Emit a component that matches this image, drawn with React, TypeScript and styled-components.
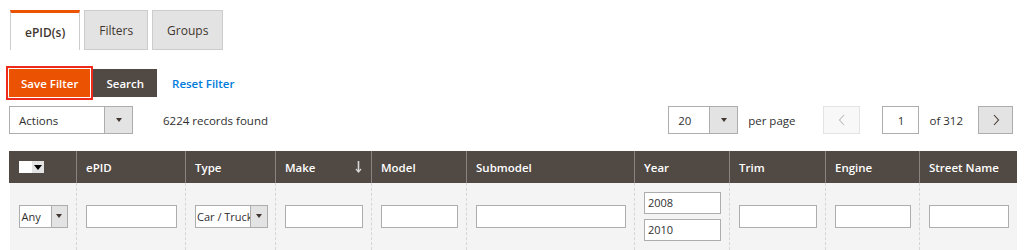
import styled, { createGlobalStyle } from "styled-components";

const GlobalStyle = createGlobalStyle`
  body {
    margin: 0;
    font-family: "Open Sans", "Liberation Sans", sans-serif;
    font-size: 11.5px;
    color: #303030;
    background: #fff;
  }
  * { box-sizing: border-box; }
`;

const Page = styled.div`
  padding: 10px 8px 0 9px;
`;

const TabBar = styled.div`
  display: flex;
  gap: 4px;
  margin-left: 1px;
`;

const Tab = styled.div<{ $active?: boolean }>`
  height: 40px;
  padding: 0 14px;
  display: flex;
  align-items: center;
  font-size: 12px;
  color: #41362f;
  font-weight: ${p => (p.$active ? 600 : 400)};
  background: ${p => (p.$active ? "#fff" : "#e3e3e3")};
  border: 1px solid #ccc;
  border-top: ${p => (p.$active ? "3px solid #eb5202" : "1px solid #ccc")};
  border-bottom: ${p => (p.$active ? "none" : "1px solid #ccc")};
  padding-top: ${p => (p.$active ? "1px" : "0")};
`;

const ButtonRow = styled.div`
  display: flex;
  align-items: center;
  margin-top: 19px;
`;

const Button = styled.button<{ $primary?: boolean }>`
  height: 28px;
  padding: 0 ${p => (p.$primary ? "11px" : "12px")};
  font-family: inherit;
  font-size: 11.5px;
  font-weight: 600;
  color: #fff;
  border: 1px solid ${p => (p.$primary ? "#eb5202" : "#514943")};
  background: ${p => (p.$primary ? "#eb5202" : "#514943")};
  outline: ${p => (p.$primary ? "2px solid #ee2a1c" : "none")};
  outline-offset: 1px;
  margin-left: ${p => (p.$primary ? "0" : "3px")};
`;

const ResetLink = styled.a`
  margin-left: 15px;
  color: #007bdb;
  font-weight: 600;
  text-decoration: none;
`;

const Toolbar = styled.div`
  display: flex;
  justify-content: space-between;
  align-items: center;
  margin-top: 9px;
  height: 28px;
`;

const ToolGroup = styled.div<{ $end?: number }>`
  display: flex;
  align-items: center;
  margin-right: ${p => p.$end ?? 0}px;
`;

const Note = styled.span<{ $gap: number }>`
  margin-left: ${p => p.$gap}px;
  color: #303030;
`;

const SelectBox = styled.div<{ $w: number; $h: number; $gap?: number; $small?: boolean }>`
  position: relative;
  display: flex;
  width: ${p => p.$w}px;
  height: ${p => p.$h}px;
  margin-left: ${p => p.$gap ?? 0}px;
  border: 1px solid #adadad;
  background: #fff;
  overflow: hidden;
  font-size: ${p => (p.$small ? "11px" : "inherit")};
`;

const SelectText = styled.span<{ $pad: number }>`
  flex: 1;
  display: flex;
  align-items: center;
  padding-left: ${p => p.$pad}px;
  white-space: nowrap;
  color: #303030;
`;

const SelectArrow = styled.span<{ $w: number }>`
  position: absolute;
  top: 0;
  right: 0;
  bottom: 0;
  width: ${p => p.$w}px;
  display: flex;
  align-items: center;
  justify-content: center;
  background: #e3e3e3;
  border-left: 1px solid #adadad;
  &::after {
    content: "";
    border-left: 3.5px solid transparent;
    border-right: 3.5px solid transparent;
    border-top: 4px solid #41362f;
  }
`;

const PageButton = styled.span<{ $disabled?: boolean; $gap: number }>`
  width: ${p => (p.$disabled ? 37 : 35)}px;
  height: 28px;
  margin-left: ${p => p.$gap}px;
  display: flex;
  align-items: center;
  justify-content: center;
  background: ${p => (p.$disabled ? "#f8f8f8" : "#e3e3e3")};
  border: 1px solid ${p => (p.$disabled ? "#e3e3e3" : "#adadad")};
  color: ${p => (p.$disabled ? "#bdbdbd" : "#41362f")};
`;

const PageInput = styled.span`
  width: 37px;
  height: 28px;
  margin-left: 22px;
  border: 1px solid #adadad;
  display: flex;
  align-items: center;
  justify-content: center;
`;

const Grid = styled.table`
  margin-top: 17px;
  width: 1007px;
  border-collapse: collapse;
  table-layout: fixed;
`;

const HeadCell = styled.th`
  height: 32px;
  padding: 0 9px;
  background: #514943;
  color: #fff;
  font-weight: 600;
  text-align: left;
  white-space: nowrap;
  border-left: 1px solid #8a837f;
  border-right: 1px solid #8a837f;
  &:first-child { border-left-color: #514943; }
  &:last-child { border-right-color: #514943; }
`;

const SortHead = styled.div`
  display: flex;
  align-items: center;
  justify-content: space-between;
`;

const FilterCell = styled.td`
  height: 67px;
  padding: 0 8px 0 9px;
  background: #f4f4f4;
  border-left: 1px dashed #d6d6d6;
  border-right: 1px dashed #d6d6d6;
  border-bottom: 1px solid #e3e3e3;
  vertical-align: middle;
  &:first-child { border-left: none; }
  &:last-child { border-right: none; }
`;

const TextInput = styled.div<{ $h?: number }>`
  width: 100%;
  height: ${p => p.$h ?? 23}px;
  padding: 0 3px;
  display: flex;
  align-items: center;
  font-size: 11px;
  background: #fff;
  border: 1px solid #adadad;
`;

const YearStack = styled.div`
  display: flex;
  flex-direction: column;
  gap: 5px;
`;

const MassCheck = styled.div`
  display: flex;
  width: 25px;
  height: 12px;
  background: #fff;
`;

const MassArrow = styled.span`
  margin-left: auto;
  width: 12px;
  display: flex;
  align-items: center;
  justify-content: center;
  background: #e3e3e3;
  &::after {
    content: "";
    border-left: 4px solid transparent;
    border-right: 4px solid transparent;
    border-top: 5px solid #000;
  }
`;

const Chevron = ({ dir }: { dir: "left" | "right" }) => (
  <svg width="8" height="12" viewBox="0 0 8 12">
    <polyline
      points={dir === "left" ? "6,1 1.5,6 6,11" : "2,1 6.5,6 2,11"}
      fill="none"
      stroke="currentColor"
      strokeWidth="1.1"
    />
  </svg>
);

const SortArrow = () => (
  <svg width="7" height="12" viewBox="0 0 7 12">
    <line x1="3.5" y1="0" x2="3.5" y2="10" stroke="#d9d9d9" strokeWidth="1.6" />
    <polyline points="1,8 3.5,11 6,8" fill="none" stroke="#d9d9d9" strokeWidth="1.2" />
  </svg>
);

const columns = [
  { name: "", width: 67 },
  { name: "ePID", width: 109 },
  { name: "Type", width: 90 },
  { name: "Make", width: 96, sorted: true },
  { name: "Model", width: 95 },
  { name: "Submodel", width: 168 },
  { name: "Year", width: 95 },
  { name: "Trim", width: 96 },
  { name: "Engine", width: 94 },
  { name: "Street Name", width: 97 },
];

export default function App() {
  return (
    <Page>
      <GlobalStyle />
      <TabBar>
        <Tab $active>ePID(s)</Tab>
        <Tab>Filters</Tab>
        <Tab>Groups</Tab>
      </TabBar>

      <ButtonRow>
        <Button $primary>Save Filter</Button>
        <Button>Search</Button>
        <ResetLink href="#">Reset Filter</ResetLink>
      </ButtonRow>

      <Toolbar>
        <ToolGroup>
          <SelectBox $w={124} $h={28}>
            <SelectText $pad={9}>Actions</SelectText>
            <SelectArrow $w={28} />
          </SelectBox>
          <Note $gap={30}>6224 records found</Note>
        </ToolGroup>
        <ToolGroup $end={3}>
          <SelectBox $w={70} $h={28}>
            <SelectText $pad={9}>20</SelectText>
            <SelectArrow $w={28} />
          </SelectBox>
          <Note $gap={10}>per page</Note>
          <PageButton $disabled $gap={28}>
            <Chevron dir="left" />
          </PageButton>
          <PageInput>1</PageInput>
          <Note $gap={10}>of 312</Note>
          <PageButton $gap={15}>
            <Chevron dir="right" />
          </PageButton>
        </ToolGroup>
      </Toolbar>

      <Grid>
        <colgroup>
          {columns.map((c, i) => (
            <col key={i} style={{ width: c.width }} />
          ))}
        </colgroup>
        <thead>
          <tr>
            {columns.map((c, i) => (
              <HeadCell key={i}>
                {i === 0 ? (
                  <MassCheck>
                    <MassArrow />
                  </MassCheck>
                ) : c.sorted ? (
                  <SortHead>
                    {c.name}
                    <SortArrow />
                  </SortHead>
                ) : (
                  c.name
                )}
              </HeadCell>
            ))}
          </tr>
        </thead>
        <tbody>
          <tr>
            <FilterCell>
              <SelectBox $w={49} $h={23} $small>
                <SelectText $pad={2}>Any</SelectText>
                <SelectArrow $w={16} />
              </SelectBox>
            </FilterCell>
            <FilterCell>
              <TextInput />
            </FilterCell>
            <FilterCell>
              <SelectBox $w={73} $h={23} $small>
                <SelectText $pad={1}>Car / Truck</SelectText>
                <SelectArrow $w={17} />
              </SelectBox>
            </FilterCell>
            <FilterCell>
              <TextInput />
            </FilterCell>
            <FilterCell>
              <TextInput />
            </FilterCell>
            <FilterCell>
              <TextInput />
            </FilterCell>
            <FilterCell>
              <YearStack>
                <TextInput $h={22}>2008</TextInput>
                <TextInput $h={22}>2010</TextInput>
              </YearStack>
            </FilterCell>
            <FilterCell>
              <TextInput />
            </FilterCell>
            <FilterCell>
              <TextInput />
            </FilterCell>
            <FilterCell>
              <TextInput />
            </FilterCell>
          </tr>
        </tbody>
      </Grid>
    </Page>
  );
}
